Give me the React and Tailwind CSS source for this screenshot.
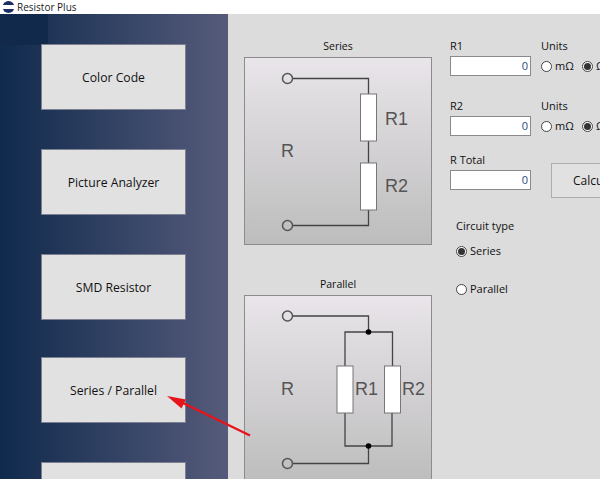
const font = { fontFamily: '"Open Sans", "Noto Sans", sans-serif' };

function NavButton({ label, className = "" }) {
  return (
    <button className={`relative ml-[41px] flex h-[66px] w-[145px] shrink-0 items-center justify-center border border-[#7d8090] bg-[#e1e1e1] pt-[2px] text-[12.2px] text-[#111] ${className}`}>
      {label}
    </button>
  );
}

function Radio({ checked }) {
  return (
    <span className="flex h-[11px] w-[11px] shrink-0 items-center justify-center rounded-full border border-[#444] bg-white">
      {checked && <span className="h-[7px] w-[7px] rounded-full bg-[#333]" />}
    </span>
  );
}

function Field({ label, className = "" }) {
  return (
    <div className={`flex w-[81px] shrink-0 flex-col ${className}`}>
      <span className="h-[16px] text-[11px] leading-[16px] text-[#111]">{label}</span>
      <div className="mt-[2px] flex h-[20px] items-center justify-end border border-[#8a8a8a] bg-white pr-[2px] text-[11px] text-[#2a4a7a]">0</div>
    </div>
  );
}

function Units({ className = "" }) {
  return (
    <div className={`flex shrink-0 flex-col ${className}`}>
      <span className="h-[16px] text-[11px] leading-[16px] text-[#111]">Units</span>
      <div className="mt-[2px] flex h-[20px] items-center whitespace-nowrap text-[11px] text-[#111]">
        <Radio />
        <span className="ml-[3px] w-[27px]">mΩ</span>
        <Radio checked />
        <span className="ml-[3px]">Ω</span>
      </div>
    </div>
  );
}

const stroke = "#444";
function Terminal({ y }) {
  return <circle cx="43.5" cy={y} r="5" fill="none" stroke="#555" strokeWidth="1.5" />;
}
function Res({ x, y }) {
  return <rect x={x} y={y} width="16" height="47" fill="#fff" stroke="#777" strokeWidth="1" />;
}
function Lbl({ x, y, children }) {
  return (
    <text x={x} y={y} fontFamily='"Liberation Sans", sans-serif' fontSize="18" fill="#555">
      {children}
    </text>
  );
}

function Panel({ children }) {
  return (
    <div className="h-[188px] w-[188px] shrink-0 border border-[#8c8c8c] bg-gradient-to-b from-[#e9e5ea] to-[#bdbdbd]">
      <svg width="186" height="186" viewBox="1 1 186 186" className="block">{children}</svg>
    </div>
  );
}

export default function App() {
  return (
    <div className="relative flex h-[479px] w-[600px] flex-col overflow-hidden bg-[#dcdcdc]" style={font}>
      <div className="flex h-[14px] shrink-0 items-center bg-white pl-[2px] text-[10px] text-[#222]">
        <svg width="13" height="12" viewBox="0 0 13 12" className="shrink-0">
          <circle cx="6.5" cy="6" r="6" fill="#1b2f66" />
          <rect x="0" y="4" width="13" height="4" fill="#fff" />
        </svg>
        <span className="ml-[2px]">Resistor Plus</span>
      </div>
      <div className="flex min-h-0 flex-1">
        <aside className="flex h-full w-[228px] shrink-0 flex-col bg-gradient-to-r from-[#0e2a4d] to-[#565b7b]">
          <div className="h-[31px] w-[48px] shrink-0 bg-[#112a4c]" />
          <NavButton label="Color Code" className="-mt-[1px]" />
          <NavButton label="Picture Analyzer" className="mt-[39px]" />
          <NavButton label="SMD Resistor" className="mt-[39px]" />
          <NavButton label="Series / Parallel" className="mt-[37px]" />
          <NavButton label="" className="mt-[39px]" />
        </aside>
        <main className="flex min-w-0 flex-1 gap-[18px] pl-[16px]">
          <section className="flex w-[188px] shrink-0 flex-col items-center">
            <span className="mt-[24px] h-[19px] shrink-0 text-[10.5px] leading-[16px] text-[#111]">Series</span>
            <Panel>
              <g fill="none" stroke={stroke} strokeWidth="1.3">
                <path d="M48.5 21.5H124.5V37M124.5 84V106M124.5 153V168.5H48.5" />
              </g>
              <Terminal y={21.5} />
              <Terminal y={168.5} />
              <Res x={116.5} y={37} />
              <Res x={116.5} y={106} />
              <Lbl x={141} y={68}>R1</Lbl>
              <Lbl x={141} y={135}>R2</Lbl>
              <Lbl x={37} y={100}>R</Lbl>
            </Panel>
            <span className="mt-[31px] h-[19px] shrink-0 text-[10.5px] leading-[16px] text-[#111]">Parallel</span>
            <Panel>
              <g fill="none" stroke={stroke} strokeWidth="1.3">
                <path d="M48.5 21H124.5V37M101 71V37H148.5V71M101 118V151H148V118M124.5 151V168.5H48.5" />
              </g>
              <circle cx="124.5" cy="37" r="2.8" fill="#000" />
              <circle cx="124.5" cy="151" r="2.8" fill="#000" />
              <Terminal y={21} />
              <Terminal y={168.5} />
              <Res x={93} y={71} />
              <Res x={140.5} y={71} />
              <Lbl x={111} y={100}>R1</Lbl>
              <Lbl x={158} y={100}>R2</Lbl>
              <Lbl x={37} y={100}>R</Lbl>
            </Panel>
          </section>
          <section className="flex min-w-0 flex-1 flex-col pt-[24px]">
            <div className="flex gap-[10px]">
              <Field label="R1" />
              <Units />
            </div>
            <div className="mt-[22px] flex gap-[10px]">
              <Field label="R2" />
              <Units />
            </div>
            <div className="mt-[16px] flex items-start">
              <Field label="R Total" />
              <button className="ml-[20px] mt-[11px] h-[35px] w-[90px] shrink-0 border border-[#adadad] bg-[#e1e1e1] pl-[21px] text-left text-[12px] text-[#111]">
                Calculate
              </button>
            </div>
            <div className="ml-[6px] mt-[20px] flex flex-col text-[11px] text-[#111]">
              <span className="h-[16px] leading-[16px]">Circuit type</span>
              <div className="mt-[9px] flex h-[16px] items-center gap-[3px]"><Radio checked /><span>Series</span></div>
              <div className="mt-[22px] flex h-[16px] items-center gap-[3px]"><Radio /><span>Parallel</span></div>
            </div>
          </section>
        </main>
      </div>
      <svg className="pointer-events-none absolute left-0 top-0" width="600" height="479">
        <path d="M250 435.5L183 403" stroke="#e8141c" strokeWidth="2.5" fill="none" />
        <path d="M167 396L186 399.5L181.5 408.5Z" fill="#e8141c" />
      </svg>
    </div>
  );
}
